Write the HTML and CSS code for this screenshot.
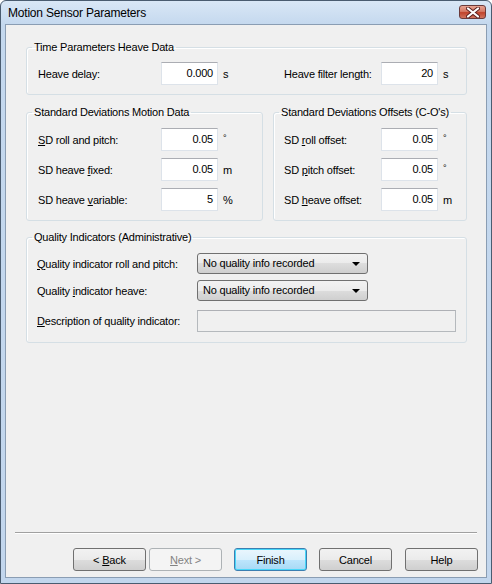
FILE: index.html
```html
<!DOCTYPE html>
<html lang="en">
<head>
    <meta charset="UTF-8">
    <title>Motion Sensor Parameters</title>
    <link rel="stylesheet" href="styles.css">
</head>
<body>
    <div class="window">
        <div class="titlebar">
            <span class="title">Motion Sensor Parameters</span>
            <span class="close">
                <svg width="14" height="11" viewBox="0 0 14 11">
                    <path d="M2 1.5 L12 9.5 M12 1.5 L2 9.5" stroke="#5a2020" stroke-width="4" stroke-linecap="round"/>
                    <path d="M2 1.5 L12 9.5 M12 1.5 L2 9.5" stroke="#fff" stroke-width="2.2" stroke-linecap="round"/>
                </svg>
            </span>
        </div>
        <div class="client">
            <div class="content">
                <fieldset class="group g-time">
                    <legend>Time Parameters Heave Data</legend>
                    <div class="cols">
                        <div class="row left">
                            <label class="lbl">Heave delay:</label>
                            <div class="field">0.000</div>
                            <span class="unit">s</span>
                        </div>
                        <div class="row right">
                            <label class="lbl">Heave filter length:</label>
                            <div class="field">20</div>
                            <span class="unit">s</span>
                        </div>
                    </div>
                </fieldset>

                <div class="pair">
                    <fieldset class="group g-motion">
                        <legend>Standard Deviations Motion Data</legend>
                        <div class="row left">
                            <label class="lbl"><u>S</u>D roll and pitch:</label>
                            <div class="field">0.05</div>
                            <span class="unit deg">°</span>
                        </div>
                        <div class="row left">
                            <label class="lbl">SD heave <u>f</u>ixed:</label>
                            <div class="field">0.05</div>
                            <span class="unit">m</span>
                        </div>
                        <div class="row left">
                            <label class="lbl">SD heave <u>v</u>ariable:</label>
                            <div class="field">5</div>
                            <span class="unit">%</span>
                        </div>
                    </fieldset>
                    <fieldset class="group g-offsets">
                        <legend>Standard Deviations Offsets (C-O's)</legend>
                        <div class="row right">
                            <label class="lbl">SD <u>r</u>oll offset:</label>
                            <div class="field">0.05</div>
                            <span class="unit deg">°</span>
                        </div>
                        <div class="row right">
                            <label class="lbl">SD <u>p</u>itch offset:</label>
                            <div class="field">0.05</div>
                            <span class="unit deg">°</span>
                        </div>
                        <div class="row right">
                            <label class="lbl">SD <u>h</u>eave offset:</label>
                            <div class="field">0.05</div>
                            <span class="unit">m</span>
                        </div>
                    </fieldset>
                </div>

                <fieldset class="group g-quality">
                    <legend>Quality Indicators (Administrative)</legend>
                    <div class="qrow">
                        <label class="qlbl"><u>Q</u>uality indicator roll and pitch:</label>
                        <div class="combo">No quality info recorded<span class="arrow"></span></div>
                    </div>
                    <div class="qrow">
                        <label class="qlbl">Quality <u>i</u>ndicator heave:</label>
                        <div class="combo">No quality info recorded<span class="arrow"></span></div>
                    </div>
                    <div class="qrow desc">
                        <label class="qlbl"><u>D</u>escription of quality indicator:</label>
                        <div class="field disabled"></div>
                    </div>
                </fieldset>
            </div>

            <div class="footer">
                <div class="separator"></div>
                <div class="buttons">
                    <button type="button">&lt; <u>B</u>ack</button>
                    <button type="button" class="next" disabled><u>N</u>ext &gt;</button>
                    <button type="button" class="default">Finish</button>
                    <button type="button">Cancel</button>
                    <button type="button">Help</button>
                </div>
            </div>
        </div>
    </div>
</body>
</html>
```

FILE: styles.css
```css
body {
    margin: 0;
    padding: 0;
    font-family: "Liberation Sans", Arial, sans-serif;
    font-size: 11px;
    letter-spacing: -0.2px;
    color: #000;
    background-color: #fff;
}
.window {
    width: 492px;
    height: 584px;
    box-sizing: border-box;
    border: 1px solid #4a5c70;
    border-radius: 6px 6px 0 0;
    background: linear-gradient(#d9e7f6, #c4d8ee 24px, #c2d6ed);
    display: flex;
    flex-direction: column;
}
.titlebar {
    height: 23px;
    position: relative;
    flex: none;
}
.title {
    position: absolute;
    left: 7px;
    top: 5px;
    font-size: 12px;
    letter-spacing: -0.2px;
}
.close {
    position: absolute;
    right: 5px;
    top: 4px;
    width: 27px;
    height: 14px;
    box-sizing: border-box;
    border: 1px solid #6b3a3a;
    border-radius: 3px;
    background: linear-gradient(#e8a393, #d57a66 45%, #c0432c 55%, #d0735e);
    display: flex;
    justify-content: center;
    align-items: center;
}
.client {
    flex: 1;
    margin: 0 4px 5px 4px;
    border: 1px solid #8a9db3;
    background-color: #f0f0f0;
    display: flex;
    flex-direction: column;
}
.content {
    flex: 1;
    padding: 16px 0 0 20px;
    width: 441px;
}
.group {
    margin: 0;
    border: 1px solid #d5dfe5;
    border-radius: 3px;
    box-shadow: inset 1px 1px 0 #fff;
    min-width: 0;
}
.group legend {
    padding: 0 2px;
    margin-left: 5px;
    line-height: 13px;
}
.g-time {
    padding: 8px 0 9px 0;
}
.cols {
    display: flex;
}
.row {
    display: flex;
    align-items: center;
    height: 23px;
}
.row.left {
    width: 247px;
    box-sizing: border-box;
    padding-left: 11px;
}
.row.right {
    padding-left: 10px;
}
.row.left .lbl {
    width: 123px;
}
.row.right .lbl {
    width: 97px;
}
.field {
    width: 57px;
    height: 23px;
    box-sizing: border-box;
    border: 1px solid #dde3ea;
    border-top-color: #abadb3;
    background-color: #fff;
    text-align: right;
    padding: 4px 4px 0 0;
}
.unit {
    margin-left: 5px;
}
.unit.deg {
    font-size: 9px;
    margin-top: -4px;
}
.pair {
    display: flex;
    margin-top: 11px;
    gap: 10px;
}
.g-motion,
.g-offsets {
    padding: 9px 0 9px 0;
    display: flex;
    flex-direction: column;
    gap: 7px;
}
.g-motion {
    width: 237px;
    box-sizing: border-box;
}
.g-offsets {
    width: 194px;
    box-sizing: border-box;
}
.g-motion .row.left {
    width: auto;
}
.g-quality {
    margin-top: 10px;
    padding: 9px 0 10px 0;
}
.qrow {
    display: flex;
    align-items: center;
    height: 21px;
    margin-bottom: 6px;
    padding-left: 10px;
}
.qrow.desc {
    height: 22px;
    margin-top: 9px;
    margin-bottom: 0;
}
.qlbl {
    width: 160px;
}
.combo {
    width: 171px;
    height: 21px;
    box-sizing: border-box;
    border: 1px solid #707070;
    border-radius: 3px;
    background: linear-gradient(#f2f2f2 0%, #ebebeb 50%, #dddddd 50%, #cfcfcf 100%);
    padding: 3px 0 0 5px;
    position: relative;
}
.arrow {
    position: absolute;
    right: 7px;
    top: 8px;
    border-left: 4px solid transparent;
    border-right: 4px solid transparent;
    border-top: 4px solid #000;
}
.field.disabled {
    width: 259px;
    height: 22px;
    background-color: #f0f0f0;
    border-color: #b5b9bd;
    border-top-color: #aeb0b5;
}
.footer {
    padding: 0 8px 6px 8px;
}
.separator {
    margin: 0 1px;
    border-top: 1px solid #a0a0a0;
    border-bottom: 1px solid #fff;
}
.buttons {
    display: flex;
    justify-content: flex-end;
    margin-top: 14px;
}
button {
    font-family: "Liberation Sans", Arial, sans-serif;
    font-size: 11px;
    letter-spacing: -0.2px;
    width: 73px;
    height: 23px;
    margin-left: 12px;
    border: 1px solid #707070;
    border-radius: 3px;
    background: linear-gradient(#f2f2f2 0%, #ebebeb 50%, #dddddd 50%, #cfcfcf 100%);
    color: #000;
    padding: 0;
}
button.next {
    margin-left: 3px;
    border-color: #adb2b5;
    background: #f4f4f4;
    color: #838383;
}
button.default {
    border-color: #3c7fb1;
    background: linear-gradient(#eaf6fd 0%, #d9f0fc 50%, #bee6fd 50%, #a7d9f5 100%);
    box-shadow: inset 0 0 0 1px #48d7f9;
}
button:last-child {
    margin-left: 13px;
}
```
